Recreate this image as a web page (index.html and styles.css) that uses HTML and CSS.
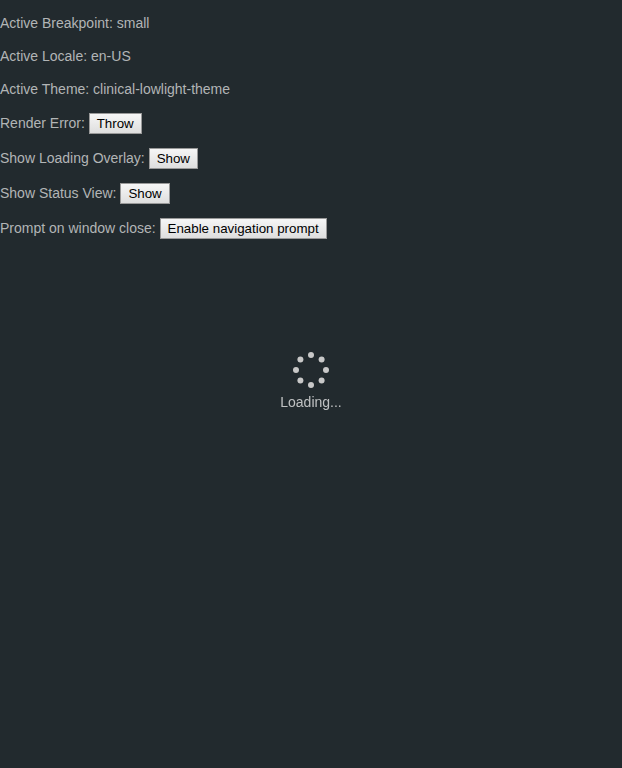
FILE: index.html
```html
<!DOCTYPE html>
<html lang="en-US">
<head>
<meta charset="utf-8">
<title>Application</title>
<link rel="stylesheet" href="styles.css">
</head>
<body>
<main class="content">
<p>Active Breakpoint: small</p>
<p>Active Locale: en-US</p>
<p>Active Theme: clinical-lowlight-theme</p>
<p>Render Error: <button type="button">Throw</button></p>
<p>Show Loading Overlay: <button type="button">Show</button></p>
<p>Show Status View: <button type="button">Show</button></p>
<p>Prompt on window close: <button type="button">Enable navigation prompt</button></p>
</main>
<div class="overlay">
<div class="loader">
<svg class="spinner" width="36" height="36" viewBox="0 0 36 36" fill="currentColor" aria-hidden="true">
<circle cx="18" cy="3" r="3"/><circle cx="28.6" cy="7.4" r="3"/><circle cx="33" cy="18" r="3"/><circle cx="28.6" cy="28.6" r="3"/><circle cx="18" cy="33" r="3"/><circle cx="7.4" cy="28.6" r="3"/><circle cx="3" cy="18" r="3"/><circle cx="7.4" cy="7.4" r="3"/>
</svg>
<div class="message">Loading...</div>
</div>
</div>
</body>
</html>
```
FILE: styles.css
```css
body {
  margin: 0;
  background: #222a2e;
  color: #b2b5b6;
  font: 14px/normal "Liberation Sans", Arial, sans-serif;
}
.content { display: flow-root; }
p { margin: 14px 0; line-height: 19px; }
button {
  box-sizing: border-box;
  height: 21px;
  margin: 0;
  padding: 1px 7px;
  border: 1px solid #999;
  border-radius: 0;
  background: linear-gradient(#f6f6f6, #dedede);
  color: #000;
  font: 13.333px/normal "Liberation Sans", Arial, sans-serif;
}
.overlay {
  position: fixed;
  inset: 0;
  display: flex;
  align-items: center;
  justify-content: center;
  pointer-events: none;
}
.loader { text-align: center; height: 64px; color: #c8c8c8; }
.spinner { display: block; margin: 0 auto; }
.message { margin-top: 6px; line-height: 16px; color: #bfc1c2; }
```
